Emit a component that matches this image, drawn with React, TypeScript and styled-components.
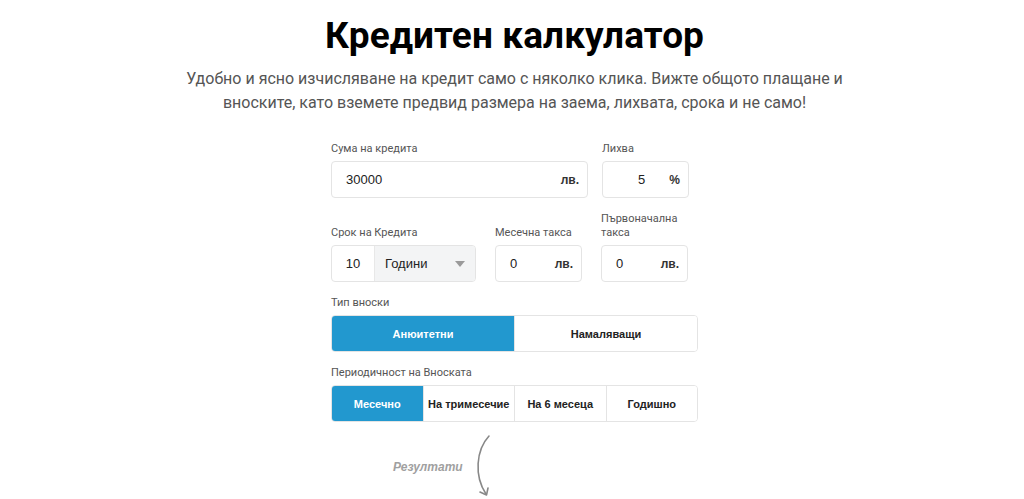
import React from "react";
import styled, { createGlobalStyle } from "styled-components";

const GlobalStyle = createGlobalStyle`
  html, body {
    margin: 0;
    padding: 0;
    background: #fff;
  }
  body {
    font-family: "Roboto", "Liberation Sans", Arial, sans-serif;
    color: #222;
  }
`;

const Page = styled.div`
  display: flex;
  flex-direction: column;
  align-items: center;
  padding: 14px 0 0 5px;
`;

const Title = styled.h1`
  margin: 0;
  font-family: "Roboto", sans-serif;
  font-size: 37px;
  line-height: 44px;
  font-weight: 700;
  color: #000;
  letter-spacing: 0.1px;
`;

const Lead = styled.p`
  margin: 9px 0 0;
  width: 660px;
  text-align: center;
  font-family: "Roboto", sans-serif;
  font-size: 16px;
  line-height: 24px;
  color: #555;
`;

const Form = styled.div`
  width: 367px;
  margin-top: 27px;
  display: flex;
  flex-direction: column;
`;

const Row = styled.div<{ $gap: number; $mt?: number }>`
  display: flex;
  align-items: flex-end;
  gap: ${({ $gap }) => $gap}px;
  margin-top: ${({ $mt }) => $mt ?? 0}px;
`;

const Field = styled.div<{ $w: number; $mt?: number }>`
  width: ${({ $w }) => $w}px;
  margin-top: ${({ $mt }) => $mt ?? 0}px;
  display: flex;
  flex-direction: column;
`;

const Label = styled.label`
  font-family: "Roboto", "Liberation Sans", sans-serif;
  font-size: 11px;
  line-height: 14px;
  color: #555;
  margin-bottom: 5px;
`;

const Box = styled.div`
  height: 37px;
  box-sizing: border-box;
  border: 1px solid #e4e4e4;
  border-radius: 4px;
  display: flex;
  align-items: center;
  overflow: hidden;
  background: #fff;
`;

const Value = styled.span<{ $right?: boolean }>`
  flex: 1;
  padding: 0 ${({ $right }) => ($right ? "24px" : "0")} 0 14px;
  text-align: ${({ $right }) => ($right ? "right" : "left")};
  font-family: "Liberation Sans", Arial, sans-serif;
  font-size: 13px;
  color: #222;
`;

const Suffix = styled.span`
  padding-right: 8px;
  font-family: "Liberation Sans", Arial, sans-serif;
  font-size: 12px;
  font-weight: 700;
  color: #333;
`;

const TermNumber = styled.span`
  width: 43px;
  height: 100%;
  display: flex;
  align-items: center;
  justify-content: center;
  font-family: "Liberation Sans", Arial, sans-serif;
  font-size: 13px;
  color: #222;
  border-right: 1px solid #e8e8e8;
  box-sizing: border-box;
`;

const Select = styled.div`
  flex: 1;
  height: 100%;
  background: #f3f4f5;
  display: flex;
  align-items: center;
  justify-content: space-between;
  padding: 0 10px 0 10px;
  font-family: "Liberation Sans", Arial, sans-serif;
  font-size: 13px;
  color: #222;
`;

const Caret = styled.span`
  width: 0;
  height: 0;
  border-left: 5px solid transparent;
  border-right: 5px solid transparent;
  border-top: 6px solid #9a9a9a;
`;

const Group = styled.div`
  height: 37px;
  display: flex;
  border: 1px solid #e4e4e4;
  border-radius: 4px;
  overflow: hidden;
  box-sizing: border-box;
`;

const Segment = styled.div<{ $active?: boolean }>`
  flex: 1;
  display: flex;
  align-items: center;
  justify-content: center;
  font-family: "Liberation Sans", Arial, sans-serif;
  font-size: 11px;
  font-weight: 700;
  color: ${({ $active }) => ($active ? "#fff" : "#222")};
  background: ${({ $active }) => ($active ? "#2298cf" : "#fff")};
  & + & {
    border-left: 1px solid #e4e4e4;
  }
`;

const Results = styled.div`
  margin-top: 12px;
  padding-left: 62px;
  display: flex;
  align-items: center;
  gap: 6px;
`;

const ResultsText = styled.span`
  font-family: "Liberation Sans", Arial, sans-serif;
  font-size: 12px;
  font-style: italic;
  font-weight: 700;
  color: #a0a0a0;
`;

function CurvedArrow() {
  return (
    <svg width="30" height="66" viewBox="0 0 30 66" fill="none">
      <path
        d="M20 2 C 7 16, 5 42, 17 60"
        stroke="#888"
        strokeWidth="1.6"
        strokeLinecap="round"
      />
      <path
        d="M11 58 L17.5 61 L19 54"
        stroke="#888"
        strokeWidth="1.6"
        strokeLinecap="round"
        strokeLinejoin="round"
      />
    </svg>
  );
}

export default function App() {
  return (
    <>
      <GlobalStyle />
      <Page>
        <Title>Кредитен калкулатор</Title>
        <Lead>
          Удобно и ясно изчисляване на кредит само с няколко клика. Вижте общото
          плащане и вноските, като вземете предвид размера на заема, лихвата,
          срока и не само!
        </Lead>
        <Form>
          <Row $gap={14}>
            <Field $w={257}>
              <Label>Сума на кредита</Label>
              <Box>
                <Value>30000</Value>
                <Suffix>лв.</Suffix>
              </Box>
            </Field>
            <Field $w={87}>
              <Label>Лихва</Label>
              <Box>
                <Value $right>5</Value>
                <Suffix>%</Suffix>
              </Box>
            </Field>
          </Row>
          <Row $gap={19} $mt={14}>
            <Field $w={145}>
              <Label>Срок на Кредита</Label>
              <Box>
                <TermNumber>10</TermNumber>
                <Select>
                  Години
                  <Caret />
                </Select>
              </Box>
            </Field>
            <Field $w={87}>
              <Label>Месечна такса</Label>
              <Box>
                <Value>0</Value>
                <Suffix>лв.</Suffix>
              </Box>
            </Field>
            <Field $w={87}>
              <Label>Първоначална такса</Label>
              <Box>
                <Value>0</Value>
                <Suffix>лв.</Suffix>
              </Box>
            </Field>
          </Row>
          <Field $w={367} $mt={14}>
            <Label>Тип вноски</Label>
            <Group>
              <Segment $active>Анюитетни</Segment>
              <Segment>Намаляващи</Segment>
            </Group>
          </Field>
          <Field $w={367} $mt={14}>
            <Label>Периодичност на Вноската</Label>
            <Group>
              <Segment $active>Месечно</Segment>
              <Segment>На тримесечие</Segment>
              <Segment>На 6 месеца</Segment>
              <Segment>Годишно</Segment>
            </Group>
          </Field>
          <Results>
            <ResultsText>Резултати</ResultsText>
            <CurvedArrow />
          </Results>
        </Form>
      </Page>
    </>
  );
}
